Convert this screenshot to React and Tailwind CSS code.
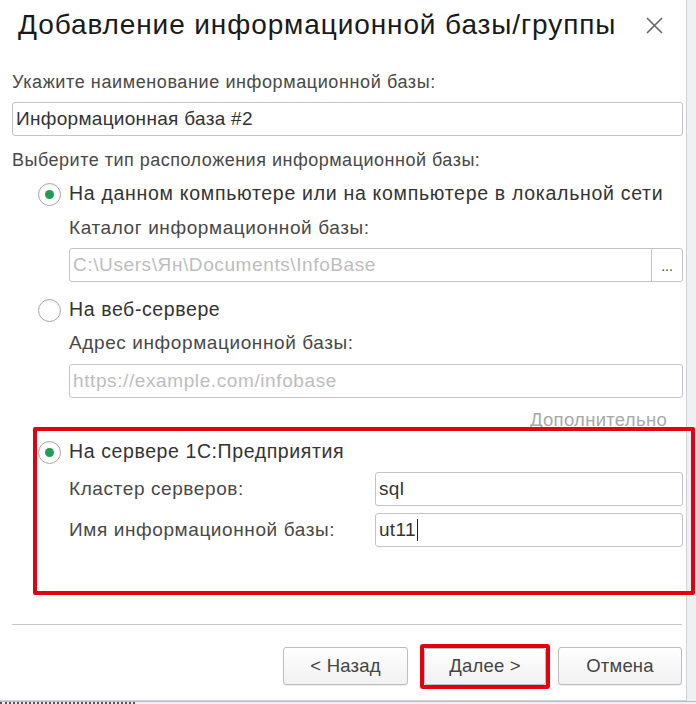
import React from "react";

function Radio({ checked }) {
  return (
    <span className="w-[23px] h-[23px] rounded-full border border-[#a8a8a8] bg-white flex items-center justify-center shrink-0 shadow-[inset_0_1px_2px_rgba(0,0,0,0.08)]">
      {checked && <span className="w-[9px] h-[9px] rounded-full bg-[#1f9d55]"></span>}
    </span>
  );
}

function Field({ value, placeholder, caret, className = "", children }) {
  return (
    <div
      className={
        "h-[34px] border border-[#c4c4c4] rounded-[3px] bg-white flex items-center text-[19px] " +
        className
      }
    >
      <span
        className={
          "pl-[3px] flex-1 flex items-center " +
          (value ? "text-[#333] tracking-[0.3px]" : "text-[#bdbdbd] tracking-[0.6px]")
        }
      >
        {value || placeholder}
        {caret && <span className="w-px h-[22px] bg-[#222] ml-px"></span>}
      </span>
      {children}
    </div>
  );
}

function Button({ children, className = "" }) {
  return (
    <button
      className={
        "h-[38px] border border-[#bdbdbd] rounded-[3px] bg-gradient-to-b from-white to-[#f1f1f1] text-[18.5px] tracking-[0.2px] text-[#444] shadow-[0_1px_1px_rgba(0,0,0,0.08)] " +
        className
      }
    >
      {children}
    </button>
  );
}

export default function App() {
  return (
    <div
      className="relative w-[696px] h-[704px] bg-[#eef1f4] overflow-hidden text-[#484848]"
      style={{ fontFamily: '"Liberation Sans", Arial, sans-serif' }}
    >
      <div className="w-[687px] h-[701px] bg-white border-r border-b border-[#cfd3d8] flex flex-col">
        <div className="h-[50px] flex items-center pl-[18px] pr-[14px]">
          <h1 className="flex-1 text-[28px] text-[#1a1a1a] tracking-[0.9px]">
            Добавление информационной базы/группы
          </h1>
          <svg width="17" height="17" viewBox="0 0 17 17" className="mr-[9px]">
            <path d="M1 1 L16 16 M16 1 L1 16" stroke="#666" strokeWidth="1.6" />
          </svg>
        </div>

        <div className="pl-[12px] w-[683px] flex flex-col">
          <div className="mt-[20px] h-[24px] flex items-center text-[18px] tracking-[0.6px]">
            Укажите наименование информационной базы:
          </div>
          <Field value="Информационная база #2" className="mt-[8px]" />
          <div className="mt-[12px] h-[24px] flex items-center text-[18px] tracking-[0.5px]">
            Выберите тип расположения информационной базы:
          </div>

          <div className="pl-[26px] flex flex-col">
            <div className="mt-[10px] h-[24px] flex items-center gap-[8px] text-[19.5px] tracking-[0.7px] text-[#333]">
              <Radio checked />
              <span>На данном компьютере или на компьютере в локальной сети</span>
            </div>
            <div className="pl-[31px] flex flex-col">
              <div className="mt-[10px] h-[24px] flex items-center text-[19px] tracking-[0.6px]">
                Каталог информационной базы:
              </div>
              <Field placeholder="C:\Users\Ян\Documents\InfoBase" className="mt-[8px]">
                <span className="w-[31px] h-full border-l border-[#c4c4c4] flex items-end justify-center pb-[8px] text-[14px] leading-none text-[#444]">
                  ...
                </span>
              </Field>
            </div>

            <div className="mt-[16px] h-[24px] flex items-center gap-[8px] text-[19.5px] tracking-[0.6px] text-[#333]">
              <Radio />
              <span>На веб-сервере</span>
            </div>
            <div className="pl-[31px] flex flex-col">
              <div className="mt-[9px] h-[24px] flex items-center text-[19px] tracking-[0.6px]">
                Адрес информационной базы:
              </div>
              <Field placeholder="https://example.com/infobase" className="mt-[9px]" />
              <div className="mt-[12px] h-[20px] flex items-center justify-end pr-[16px] text-[18.5px] tracking-[0.3px] text-[#a8a8a8]">
                Дополнительно
              </div>
            </div>

            <div className="mt-[10px] h-[24px] flex items-center gap-[8px] text-[19.5px] tracking-[0.6px] text-[#333]">
              <Radio checked />
              <span>На сервере 1С:Предприятия</span>
            </div>
            <div className="pl-[31px] flex flex-col">
              <div className="mt-[8px] flex items-center text-[19px] tracking-[0.6px]">
                <span className="w-[306px]">Кластер серверов:</span>
                <Field value="sql" className="flex-1" />
              </div>
              <div className="mt-[7px] flex items-center text-[19px] tracking-[0.6px]">
                <span className="w-[306px]">Имя информационной базы:</span>
                <Field value="ut11" caret className="flex-1" />
              </div>
            </div>
          </div>

          <div className="mt-[77px] h-px bg-[#c8c8c8] w-[670px]"></div>
        </div>

        <div className="mt-[18px] h-[46px] flex items-center pl-[283px]">
          <Button className="w-[125px]">&lt; Назад</Button>
          <div className="ml-[12px] w-[130px] h-[45px] border-[4px] border-[#e3000f] rounded-[3px] flex">
            <Button className="w-full h-full">Далее &gt;</Button>
          </div>
          <Button className="ml-[8px] w-[124px]">Отмена</Button>
        </div>
      </div>

      <div className="flex h-[3px] border-t border-[#b8bcc2]">
        <div className="w-[135px] border-b-2 border-dotted border-[#555]"></div>
      </div>

      <div className="absolute left-[33px] top-[427px] w-[662px] h-[168px] border-[4px] border-[#e3000f] rounded-[2px] pointer-events-none"></div>
    </div>
  );
}
